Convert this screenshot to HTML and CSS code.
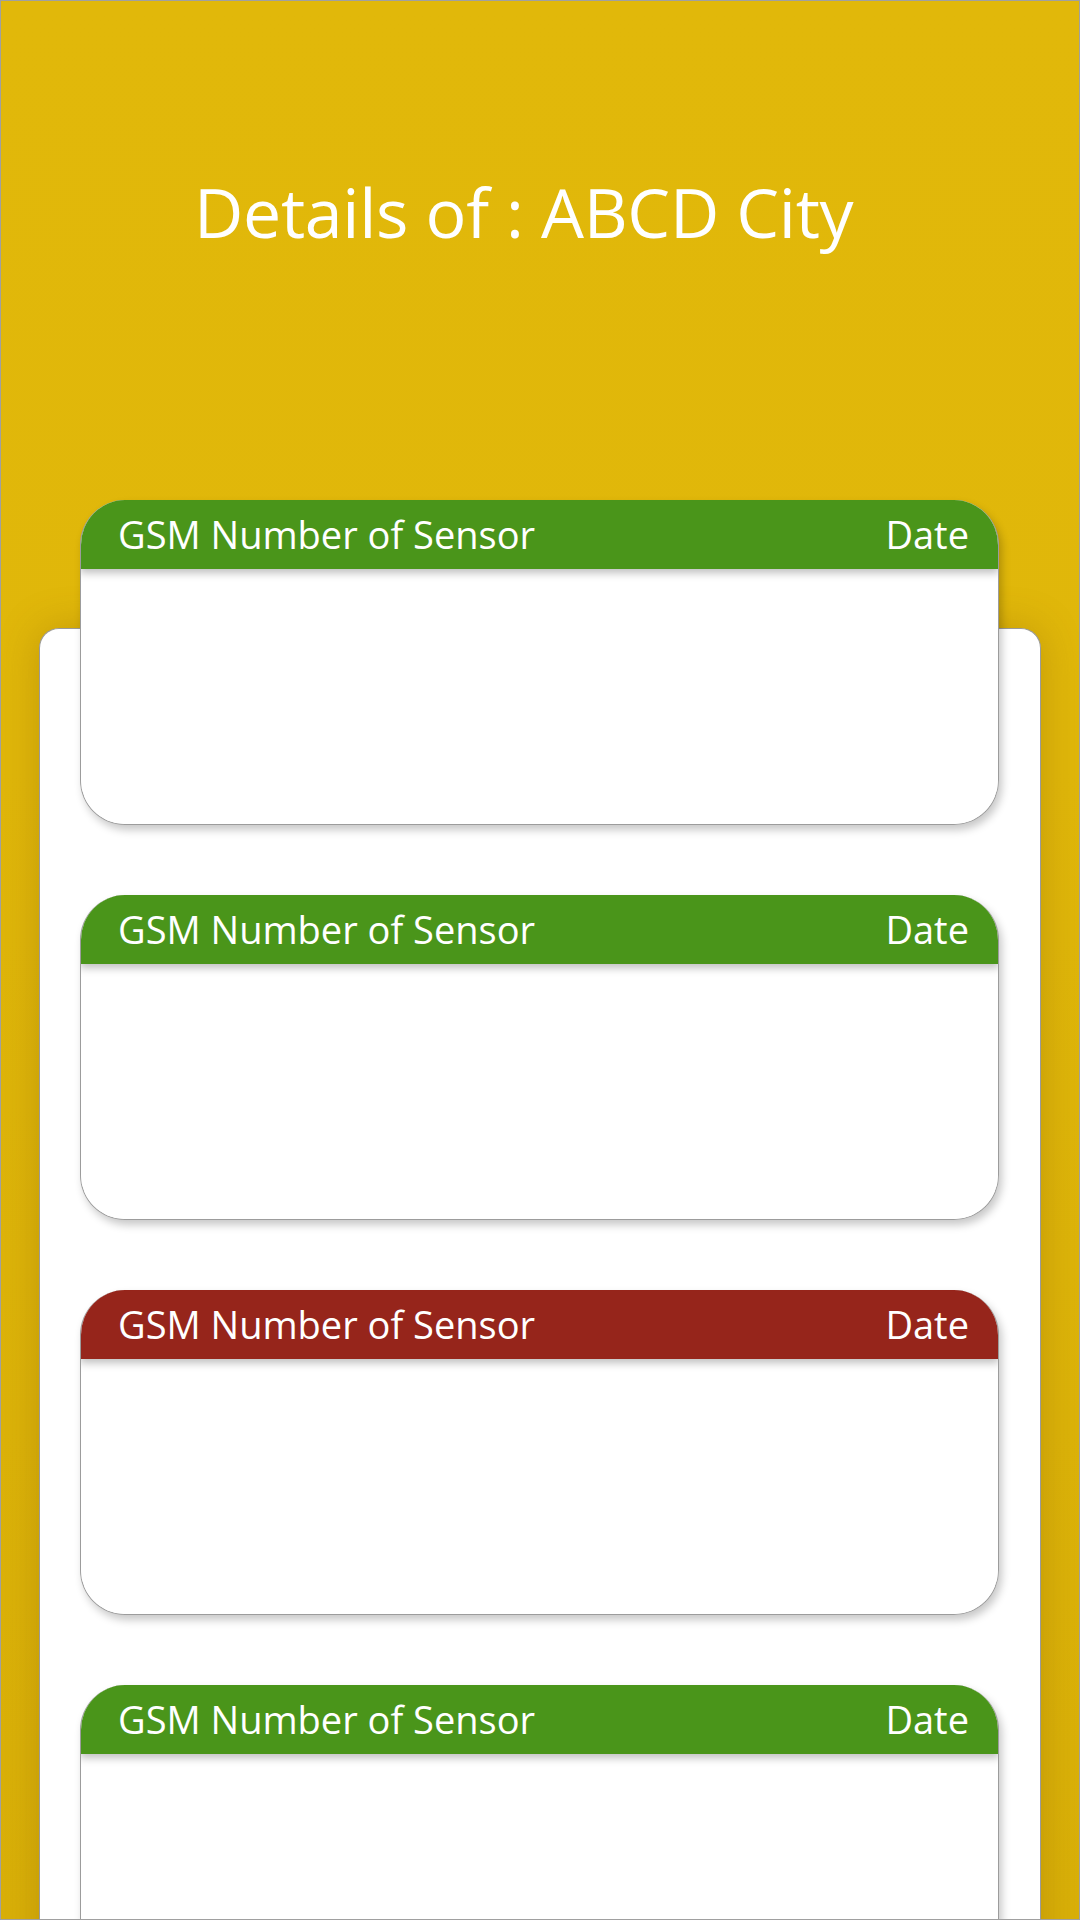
FILE: index.html
```html
<!DOCTYPE html>
<html>
<head>
<meta charset="utf-8">
<link rel="stylesheet" href="styles.css">
</head>
<body>
<div class="page">
  <header class="top">
    <h1 class="title">Details of : ABCD City</h1>
  </header>
  <main class="sheet">
    <div class="cards">
      <section class="card">
        <div class="card-head ok"><span>GSM Number of Sensor</span><span>Date</span></div>
        <div class="card-body"></div>
      </section>
      <section class="card">
        <div class="card-head ok"><span>GSM Number of Sensor</span><span>Date</span></div>
        <div class="card-body"></div>
      </section>
      <section class="card">
        <div class="card-head alert"><span>GSM Number of Sensor</span><span>Date</span></div>
        <div class="card-body"></div>
      </section>
      <section class="card">
        <div class="card-head ok"><span>GSM Number of Sensor</span><span>Date</span></div>
        <div class="card-body"></div>
      </section>
    </div>
  </main>
</div>
</body>
</html>
```

FILE: styles.css
```css
* { box-sizing: border-box; }
html, body { margin: 0; padding: 0; }
body {
  width: 1080px;
  height: 1920px;
  overflow: hidden;
  font-family: "Open Sans", "Noto Sans", sans-serif;
}
.page {
  width: 1080px;
  height: 1920px;
  border: 1px solid #a0a0a0;
  background: linear-gradient(180deg, #e1b80a 0%, #e0b70a 40%, #d9b008 100%);
  overflow: hidden;
  display: flex;
  flex-direction: column;
}
.top {
  height: 627px;
  flex: none;
}
.title {
  margin: 0;
  padding: 166px 0 0 193px;
  font-weight: 400;
  font-size: 68px;
  line-height: 90px;
  color: #ffffff;
  letter-spacing: -0.3px;
  white-space: nowrap;
}
.sheet {
  flex: 1;
  margin: 0 38px 0 38px;
  background: #ffffff;
  border: 1px solid #9a9a9a;
  border-bottom: none;
  border-radius: 20px 20px 0 0;
  box-shadow: 0 0 40px rgba(120, 80, 0, 0.28);
  padding: 0 41px 0 40px;
}
.cards {
  margin-top: -129px;
  display: flex;
  flex-direction: column;
  gap: 70px;
}
.card {
  height: 325px;
  border-radius: 45px;
  background: #ffffff;
  border: 1px solid #9c9c9c;
  border-top: none;
  box-shadow: 3px 5px 8px rgba(0, 0, 0, 0.22);
  overflow: hidden;
  display: flex;
  flex-direction: column;
}
.card-head {
  height: 69px;
  flex: none;
  display: flex;
  justify-content: space-between;
  align-items: center;
  padding: 0 30px 0 38px;
  margin: 0 -1px;
  color: #ffffff;
  font-size: 38px;
  letter-spacing: 0;
  box-shadow: 0 4px 8px rgba(0, 0, 0, 0.25);
  position: relative;
  z-index: 1;
}
.card-head span { line-height: 1; padding-bottom: 1px; }
.ok { background: #4a951a; }
.alert { background: #96251b; }
.card-body { flex: 1; background: #ffffff; }
```
